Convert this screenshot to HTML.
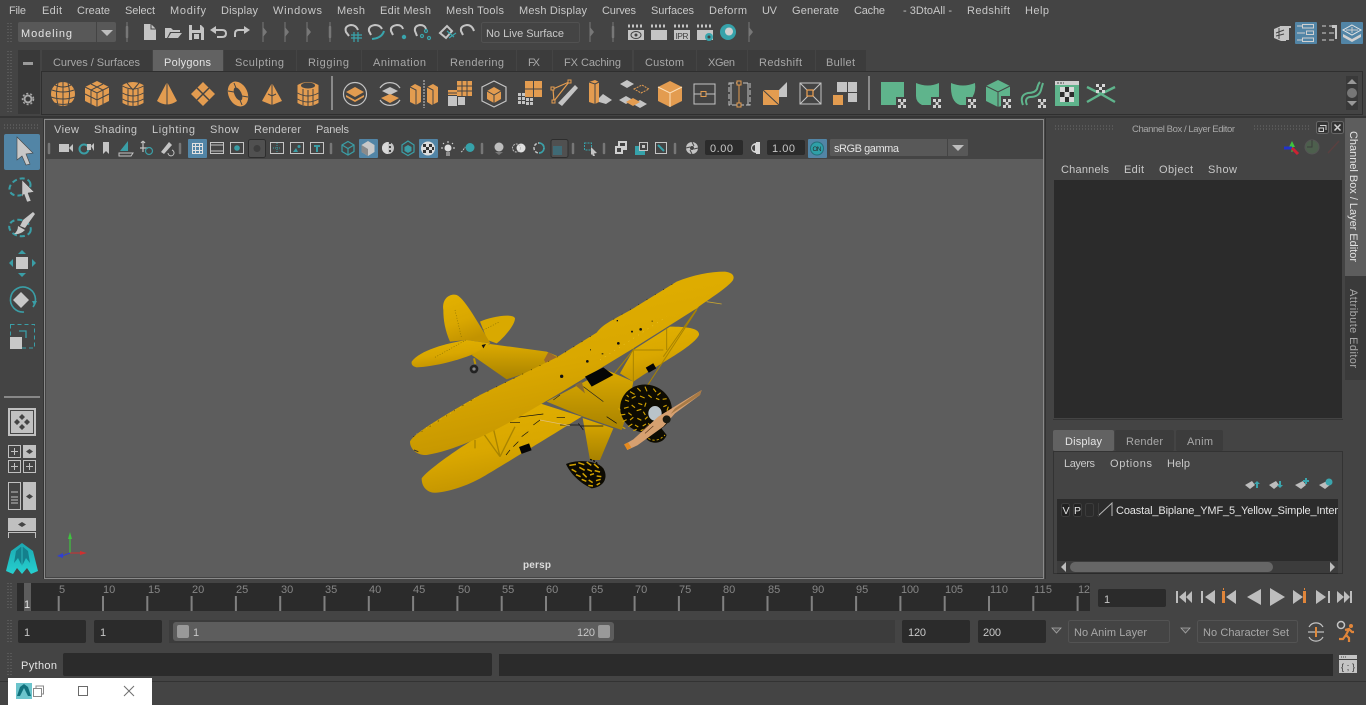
<!DOCTYPE html>
<html><head><meta charset="utf-8"><title>Maya</title>
<style>
html,body{margin:0;padding:0;background:#444;overflow:hidden}
svg{display:block}
text{font-family:"Liberation Sans",sans-serif;font-size:11px;fill:#c8c8c8;white-space:pre}
.d{fill:#a8a8a8}
.w{fill:#e4e4e4}
.g{fill:#868686}
.o{fill:#e39c50}
.gr{fill:#c4c4c4}
.t{fill:#2fa0a8}
.gn{fill:#5fb48c}
.ln{fill:none;stroke:#c4c4c4;stroke-width:1.2}
.tl{fill:none;stroke:#3a9ea6;stroke-width:1.5}
.bg{stroke:#444;stroke-width:1;fill:none}
.h{stroke:#777;stroke-width:2.5;stroke-linecap:round}
</style></head><body>
<svg width="1366" height="705" viewBox="0 0 1366 705" xmlns="http://www.w3.org/2000/svg">
<defs>
<linearGradient id="wing" x1="0" y1="0" x2="0.35" y2="1"><stop offset="0" stop-color="#e4b200"/><stop offset=".6" stop-color="#d9a700"/><stop offset="1" stop-color="#c29300"/></linearGradient>
<linearGradient id="fus" x1="0" y1="0" x2="0" y2="1"><stop offset="0" stop-color="#dcaa00"/><stop offset="1" stop-color="#a88200"/></linearGradient>
<linearGradient id="logo" x1="0" y1="0" x2="0" y2="1"><stop offset="0" stop-color="#1ba7b0"/><stop offset="1" stop-color="#26d0d0"/></linearGradient>
<g id="hd"><path d="M0,-10V10" stroke="#777" stroke-width="1"/><path d="M0,-5L4,0L0,5Z" fill="#777"/></g>
<g id="chk"><rect x="3" y="3" width="11" height="11" fill="#444"/><g fill="#d0d0d0"><rect x="5" y="5" width="3" height="3"/><rect x="10" y="5" width="3" height="3"/><rect x="7.500" y="8" width="3" height="3"/><rect x="5" y="11" width="3" height="3"/><rect x="10" y="11" width="3" height="3"/></g></g>
</defs>
<rect width="1366" height="705" fill="#444"/>

<!-- menu bar -->
<g>
<text x="9" y="14" textLength="17">File</text><text x="42" y="14" textLength="20">Edit</text><text x="77" y="14" textLength="33">Create</text><text x="125" y="14" textLength="30">Select</text><text x="170" y="14" textLength="36">Modify</text><text x="221" y="14" textLength="37">Display</text><text x="273" y="14" textLength="49">Windows</text><text x="337" y="14" textLength="28">Mesh</text><text x="380" y="14" textLength="51">Edit Mesh</text><text x="446" y="14" textLength="58">Mesh Tools</text><text x="519" y="14" textLength="68">Mesh Display</text><text x="602" y="14" textLength="34">Curves</text><text x="651" y="14" textLength="43">Surfaces</text><text x="709" y="14" textLength="38">Deform</text><text x="762" y="14" textLength="15">UV</text><text x="792" y="14" textLength="47">Generate</text><text x="854" y="14" textLength="31">Cache</text><text x="903" y="14" textLength="49">- 3DtoAll -</text><text x="967" y="14" textLength="43">Redshift</text><text x="1025" y="14" textLength="24">Help</text>
</g>

<!-- grips -->
<g stroke="#6c6c6c" stroke-width="1" stroke-dasharray="1 2" fill="none">
<path d="M8,23V42M11,23V42M8,51V113M11,51V113M4,125H38M4,128H38M8,583V608M11,583V608M8,620V642M11,620V642M8,653V676M11,653V676M1055,126H1113M1055,129H1113M1254,126H1309M1254,129H1309"/>
</g>

<!-- status line -->
<rect x="18" y="22" width="98" height="20" rx="2" fill="#585858"/><rect x="96" y="22" width="1" height="20" fill="#444"/>
<text x="21" y="37" class="w" textLength="51">Modeling</text>
<path d="M101,30H113L107,36Z" fill="#bdbdbd"/>
<path class="h" d="M127,27V37"/><path d="M127,22V42" stroke="#777"/>
<use href="#hd" x="263" y="32"/><use href="#hd" x="285" y="32"/><use href="#hd" x="307" y="32"/>
<path class="h" d="M330,27V37"/><path d="M330,22V42" stroke="#777"/>
<!-- file icons -->
<path d="M144,24H151L156,29V40H144Z" class="gr"/><path d="M151,24V29H156" fill="none" stroke="#444"/>
<path d="M165,38V28H171L173,30H180V32H170L167,38ZM168,38L171,33H182L178,38Z" class="gr"/>
<path d="M189,25H201L204,28V40H189Z" class="gr"/><rect x="192" y="25" width="8" height="5" fill="#444"/><rect x="192" y="33" width="9" height="7" fill="#444"/><rect x="194" y="34" width="5" height="5" class="gr"/>
<path d="M214,30H222Q226,30 226,33.500Q226,37 222,37H217" fill="none" stroke="#c4c4c4" stroke-width="2"/><path d="M210,30L216,26V34Z" class="gr"/>
<path d="M250,30L244,26V34Z" class="gr"/><path d="M245,30H239Q235,30 235,33.500V37" fill="none" stroke="#c4c4c4" stroke-width="2"/>
<!-- snap icons -->
<g fill="none" stroke="#c4c4c4" stroke-width="2">
<path d="M349,36L346,32Q344,26 351,25Q356,25 358,30"/><path d="M371,35L369,31Q368,26 375,25Q380,25 382,29"/><path d="M393,35L391,31Q390,26 397,25Q402,25 403,29"/><path d="M417,36L415,31Q414,26 420,25Q425,25 426,29"/><path d="M440,33L447,26L452,31L446,38Z"/><path d="M463,35L461,31Q460,26 467,25Q472,25 474,31"/>
</g>
<g fill="none" stroke="#39a5ad" stroke-width="1.200"><path d="M351,35H362M351,38H362M354,32V42M358,32V42"/><path d="M372,39Q382,38 384,31" stroke-width="2"/><circle cx="426" cy="31" r="1.500"/><circle cx="422" cy="36" r="1.500"/><circle cx="429" cy="38" r="1.500"/><path d="M447,31L454,37M449,38L456,33"/></g>
<circle cx="404" cy="37" r="2.200" fill="#39a5ad"/>
<rect x="481.500" y="22.500" width="98" height="20" rx="2" fill="#444" stroke="#515151"/>
<text x="486" y="37" textLength="78">No Live Surface</text>
<use href="#hd" x="590" y="32"/>
<path class="h" d="M613,27V37"/><path d="M613,22V42" stroke="#777"/>
<!-- render icons -->
<g class="gr">
<rect x="628" y="30" width="16" height="10"/><rect x="651" y="30" width="16" height="10"/><rect x="674" y="30" width="16" height="10"/><rect x="697" y="30" width="16" height="10"/>
</g>
<g fill="none" stroke="#c4c4c4" stroke-width="3" stroke-dasharray="2 2"><path d="M628,26H644M651,26H667M674,26H690M697,26H713"/></g>
<ellipse cx="636" cy="35" rx="5" ry="3.500" fill="none" stroke="#444"/><circle cx="636" cy="35" r="1.500" fill="#444"/>
<text x="675.500" y="39" style="font-size:8.500px;fill:#444" textLength="13">IPR</text>
<circle cx="709" cy="37" r="4" fill="#39a5ad"/><circle cx="709" cy="37" r="1.500" fill="#444"/>
<circle cx="728" cy="32" r="8" fill="#36a2aa"/><circle cx="729" cy="31.500" r="4" fill="#cfcfcf"/>
<use href="#hd" x="749" y="32"/>
<!-- top right icons -->
<rect x="1295" y="22" width="22" height="22" rx="1" fill="#5285a6"/><rect x="1341" y="22" width="22" height="22" rx="1" fill="#5285a6"/>
<path d="M1274,29L1281,26L1286,28V41H1281L1274,38Z" class="gr"/><path d="M1280,26H1291V28H1289V40H1286V28H1280Z" class="gr"/><path d="M1276,33L1284,30M1276,36L1284,34M1279,28V39" stroke="#444"/>
<g fill="none" stroke="#d0d0d0"><rect x="1302.500" y="24.500" width="11" height="3.500"/><rect x="1306.500" y="31" width="7" height="3.500"/><rect x="1302.500" y="38" width="11" height="3.500"/><path d="M1297,26H1302M1297,33H1305M1297,40H1302"/></g>
<g fill="none" stroke="#d0d0d0"><path d="M1322,26H1326M1322,33H1326M1322,40H1326M1329,26H1334M1329,33H1334M1329,40H1334"/></g><path d="M1332,25H1337V39H1335V28H1332Z" class="gr"/>
<path d="M1352,25L1361,30L1352,35L1343,30Z" fill="none" stroke="#e4e4e4"/><path d="M1343,34L1352,39L1361,34L1361,37L1352,42L1343,37Z" fill="#d0d0d0"/><path d="M1346,30H1358M1352,27V33" stroke="#ccc"/>

<!-- shelf -->
<rect x="18" y="50" width="22" height="64" fill="#393939"/>
<rect x="23" y="62" width="10" height="3" fill="#9a9a9a"/>
<circle cx="28" cy="99" r="3.500" fill="none" stroke="#a8a8a8" stroke-width="2"/><circle cx="28" cy="99" r="5.500" fill="none" stroke="#a8a8a8" stroke-width="1.500" stroke-dasharray="2 2"/>
<g fill="#3c3c3c">
<rect x="42" y="50" width="110" height="21"/><rect x="224" y="50" width="72" height="21"/><rect x="297" y="50" width="64" height="21"/><rect x="362" y="50" width="75" height="21"/><rect x="438" y="50" width="78" height="21"/><rect x="517" y="50" width="35" height="21"/><rect x="553" y="50" width="79" height="21"/><rect x="634" y="50" width="62" height="21"/><rect x="697" y="50" width="50" height="21"/><rect x="748" y="50" width="67" height="21"/><rect x="816" y="50" width="50" height="21"/>
</g>
<rect x="153" y="50" width="70" height="21" fill="#626262"/>
<g class="tabs">
<text x="53" y="66" class="d" textLength="87">Curves / Surfaces</text><text x="164" y="66" class="w" textLength="47">Polygons</text><text x="235" y="66" class="d" textLength="49">Sculpting</text><text x="308" y="66" class="d" textLength="41">Rigging</text><text x="373" y="66" class="d" textLength="53">Animation</text><text x="450" y="66" class="d" textLength="54">Rendering</text><text x="528" y="66" class="d" textLength="12">FX</text><text x="564" y="66" class="d" textLength="57">FX Caching</text><text x="645" y="66" class="d" textLength="39">Custom</text><text x="708" y="66" class="d" textLength="27">XGen</text><text x="759" y="66" class="d" textLength="43">Redshift</text><text x="826" y="66" class="d" textLength="29">Bullet</text>
</g>
<rect x="41.500" y="71.500" width="1321" height="43" fill="#444" stroke="#2f2f2f"/>
<rect x="1346" y="76" width="12" height="34" fill="#393939"/>
<path d="M1352,79L1357,84H1347Z" fill="#999"/><circle cx="1352" cy="93" r="5" fill="#777"/><path d="M1347,101H1357L1352,106Z" fill="#999"/>
<rect x="331" y="76" width="2" height="34" fill="#8a8a8a"/><rect x="868" y="76" width="2" height="34" fill="#8a8a8a"/>

<!-- polygon icons -->
<g transform="translate(63,94)"><circle r="12" class="o"/><path class="bg" d="M-11,-4Q0,0 11,-4M-12,3Q0,7 12,3M-9,9Q0,12 9,9M0,-12V12M-5,-11Q-8,0 -5,11M5,-11Q8,0 5,11M-8,-9Q0,-5 8,-9"/></g>
<g transform="translate(97,94)"><path d="M0,-13L12,-7V7L0,13L-12,7V-7Z" class="o"/><path class="bg" d="M-12,-7L0,-1L12,-7M0,-1V13M-6,-10L6,-4V10M6,-10L-6,-4V10M-12,0L0,6L12,0"/></g>
<g transform="translate(133,94)"><path d="M-10.500,-9Q0,-15 10.500,-9V9Q0,15 -10.500,9Z" class="o"/><path class="bg" d="M-10.500,-8Q0,-2 10.500,-8M-10.500,-1Q0,5 10.500,-1M-10.500,5Q0,11 10.500,5M0,-4V13M-5,-5V11M5,-5V11M0,-4L-6,-11M0,-4L6,-11"/></g>
<g transform="translate(167,94)"><path d="M0,-12L10,7Q0,14 -10,7Z" class="o"/><path class="bg" d="M0,-12V11"/></g>
<g transform="translate(203,94)"><path d="M0,-12L12,0L0,12L-12,0Z" class="o"/><path d="M-6,-6L6,6M6,-6L-6,6" stroke="#444" stroke-width="1.500"/></g>
<g transform="translate(238,94)" ><ellipse rx="9.500" ry="13" transform="rotate(-25)" class="o"/><ellipse rx="3.500" ry="7" transform="rotate(-25)" fill="#444"/><path class="bg" d="M-10,-3L-4,-2M10,3L4,2M-4,-11L-2,-6M4,11L2,6"/></g>
<g transform="translate(272,94)"><path d="M0,-11L10,7L0,11L-10,7Z" class="o"/><path class="bg" d="M0,-11V11M-4,0L0,2L4,0"/></g>
<g transform="translate(308,94)"><path d="M-10.500,-9Q0,-15 10.500,-9V9Q0,15 -10.500,9Z" class="o"/><ellipse cy="-8.500" rx="7" ry="3" fill="#444"/><path class="bg" d="M-10.500,-1Q0,5 10.500,-1M-10.500,5Q0,11 10.500,5M0,-4V13M-5,-5V11M5,-5V11"/></g>
<g transform="translate(355,94)"><circle r="11.500" fill="none" stroke="#c4c4c4" stroke-width="1.200"/><path d="M0,-7L9,-2L0,3L-9,-2Z" class="o"/><path d="M-9,1L0,6L9,1L9,3L0,8L-9,3Z" class="o"/></g>
<g transform="translate(390,94)"><path d="M-10,-6A12,12 0 0 1 10,-6M-10,6A12,12 0 0 0 10,6" fill="none" stroke="#c4c4c4" stroke-width="1.200"/><path d="M0,-7L8,-3L0,1L-8,-3Z" class="gr"/><path d="M0,0L9,4L0,9L-9,4Z" class="o"/></g>
<g transform="translate(424,94)"><path d="M-14,-7L-9,-10L-3,-7V8L-8,11L-14,8Z" class="o"/><path d="M3,-7L9,-10L14,-7V8L8,11L3,8Z" class="o"/><path d="M-14,-7L-8,-4V11M3,-7L9,-4V11" class="bg"/><path d="M0,-14V14" stroke="#ccc" stroke-dasharray="2 1"/></g>
<g transform="translate(460,94)"><rect x="-3" y="-13" width="15" height="15" class="o"/><rect x="-12" y="2" width="9" height="10" class="gr"/><rect x="-12" y="-4" width="9" height="5" class="o"/><rect x="-2" y="3" width="7" height="8" class="gr"/><path d="M2,-13V2M7,-13V2M-3,-8H12M-3,-3H12M-12,-1H-3" class="bg"/></g>
<g transform="translate(494,94)"><path d="M0,-13L12,-7V7L0,13L-12,7V-7Z" fill="none" stroke="#c4c4c4" stroke-width="1.200"/><path d="M0,-7L7,-3V5L0,9L-7,5V-3Z" class="o"/><path d="M-7,-3L0,1L7,-3M0,1V9" class="bg"/></g>
<g transform="translate(530,94)"><rect x="-5" y="-13" width="17" height="16" class="o"/><path d="M3.500,-13V3M-5,-5H12" class="bg"/><g fill="#c4c4c4"><rect x="-12" y="-1" width="3" height="3"/><rect x="-8" y="-1" width="3" height="3"/><rect x="-12" y="3" width="3" height="3"/><rect x="-8" y="3" width="3" height="3"/><rect x="-4" y="4" width="3" height="3"/><rect x="0" y="4" width="3" height="3"/><rect x="-12" y="7" width="3" height="3"/><rect x="-8" y="7" width="3" height="3"/><rect x="-4" y="8" width="3" height="3"/><rect x="0" y="8" width="3" height="3"/></g></g>
<g transform="translate(565,94)"><path d="M-11,7L-12,-5L4,-12L-11,7" fill="none" stroke="#e39c50" stroke-width="1.200"/><path d="M-7,9L10,-9L13,-6L-3,12Z" class="gr"/><rect x="-14" y="-7" width="3" height="3" fill="#444" stroke="#e39c50"/><rect x="-13" y="6" width="3" height="3" fill="#444" stroke="#e39c50"/><rect x="3" y="-14" width="3" height="3" fill="#444" stroke="#e39c50"/></g>
<g transform="translate(600,94)"><path d="M-11,-12L-5,-14L-1,-12V8L-5,10L-11,8Z" class="o"/><path d="M-11,-12L-5,-10L-1,-12M-5,-10V10" class="bg"/><path d="M3,0L12,6L6,10L-1,8V4Z" class="gr"/></g>
<g transform="translate(634,94)"><path d="M-7,-14L0,-10L-7,-6L-14,-10ZM-8,2L-1,6L-8,10L-15,6Z" class="gr"/><path d="M6,6L13,10L6,14L-1,10Z" class="gr"/><path d="M-1,2L6,-2L13,2L6,6Z" class="o" transform="translate(-7,6)"/><path d="M0,-5L8,-9L15,-5L7,-1Z" fill="none" stroke="#e39c50" stroke-dasharray="2 1"/></g>
<g transform="translate(670,94)"><path d="M0,-13L12,-7V7L0,13L-12,7V-7Z" class="o"/><path d="M-12,-7L0,-1L12,-7M0,-1V13" stroke="#fbe0bb" stroke-width="1" fill="none"/></g>
<g transform="translate(704,94)"><rect x="-10" y="-10" width="21" height="20" fill="none" stroke="#c4c4c4"/><rect x="-3" y="-2.500" width="5" height="5" fill="#444" stroke="#e39c50"/><path d="M-10,0H-3M2,0H11" stroke="#c4c4c4"/></g>
<g transform="translate(739,94)"><path d="M-10,-11H11V11H-10Z" fill="none" stroke="#c4c4c4" stroke-dasharray="5 2"/><path d="M-8,-11V11M9,-11V11" stroke="#c4c4c4"/><path d="M-2,-11H2M-2,11H2M0,-9V9" stroke="#e39c50"/><rect x="-2" y="-13" width="4" height="4" fill="#444" stroke="#e39c50"/><rect x="-2" y="9" width="4" height="4" fill="#444" stroke="#e39c50"/></g>
<g transform="translate(775,94)"><path d="M-12,-4H4V11H-12Z" class="o"/><path d="M-12,-4L4,11" stroke="#444"/><path d="M4,-4L12,-12V3H4Z" class="gr"/></g>
<g transform="translate(810,94)"><rect x="-10" y="-11" width="21" height="21" fill="none" stroke="#c4c4c4"/><path d="M-10,-11L11,10M11,-11L-10,10" stroke="#c4c4c4"/><rect x="-3" y="-4" width="6" height="6" fill="#444" stroke="#e39c50" stroke-width="1.300"/></g>
<g transform="translate(845,94)"><rect x="-8" y="-12" width="10" height="10" class="gr"/><rect x="3" y="-12" width="9" height="10" class="gr"/><rect x="3" y="-1" width="9" height="9" class="gr"/><rect x="-12" y="1" width="10" height="10" class="o"/></g>

<!-- green icons -->
<g transform="translate(893,94)"><rect x="-12" y="-12" width="23" height="23" class="gn"/><use href="#chk"/></g>
<g transform="translate(928,94)"><path d="M-12,-11Q0,-6 11,-11V6L5,11H-6Q-12,8 -12,2Z" class="gn"/><use href="#chk"/></g>
<g transform="translate(963,94)"><path d="M-12,-11Q0,-6 12,-11Q13,-3 10,2L7,11H-3Q-13,8 -12,-11Z" class="gn"/><use href="#chk"/></g>
<g transform="translate(998,94)"><path d="M0,-14L12,-8V2H3V12L0,13L-12,7V-8Z" class="gn"/><path d="M-12,-8L0,-2L12,-8M0,-2V13" stroke="#444" fill="none"/><use href="#chk"/></g>
<g transform="translate(1033,94)"><path d="M-10,11Q-14,1 -5,-1Q2,-1 4,-5Q5,-10 7,-12" fill="none" stroke="#5fb48c" stroke-width="2"/><path d="M-6,11Q-9,4 -3,3Q6,3 8,-4Q9,-8 10,-11" fill="none" stroke="#5fb48c" stroke-width="2"/><use href="#chk"/></g>
<g transform="translate(1067,94)"><rect x="-12" y="-13" width="24" height="25" class="gn"/><rect x="-12" y="-13" width="24" height="4" fill="#d0d0d0"/><path d="M-10,-11H-3" stroke="#444" stroke-dasharray="2 1"/><rect x="-7" y="-7" width="14" height="15" fill="#2e2e2e"/><g fill="#d8d8d8"><rect x="-7" y="-7" width="5" height="5"/><rect x="2" y="-7" width="5" height="5"/><rect x="-2.500" y="-2" width="5" height="5"/><rect x="-7" y="3" width="5" height="5"/><rect x="2" y="3" width="5" height="5"/></g></g>
<g transform="translate(1101,94)"><path d="M-14,-7L-6,-3L0,0L6,-3L14,-7M-14,8L-7,4L0,0L7,4L14,8" fill="none" stroke="#5fb48c" stroke-width="2.400"/><g fill="#d8d8d8"><rect x="-5" y="-10" width="3" height="3"/><rect x="1" y="-10" width="3" height="3"/><rect x="-2" y="-7" width="3" height="3"/><rect x="-5" y="-4" width="3" height="3"/><rect x="1" y="-4" width="3" height="3"/></g></g>

<!-- dividers -->
<rect x="0" y="116" width="1366" height="2" fill="#353535"/>
<rect x="43" y="118" width="1" height="461" fill="#333"/>
<rect x="1045" y="118" width="1" height="461" fill="#333"/>

<!-- left toolbox -->
<rect x="4" y="134" width="36" height="36" rx="2" fill="#5285a6"/>
<path d="M17,137L33,153L26,154L30,164L26,165L22,156L17,160Z" fill="#c8c8c8" stroke="#444" stroke-width=".6"/>
<ellipse cx="20" cy="187" rx="11" ry="8" transform="rotate(-25 20 187)" fill="none" stroke="#3a9ea6" stroke-width="2" stroke-dasharray="5 3"/>
<path d="M22,180L34,192L28,193L31,201L27,202L24,194L22,197Z" fill="#c8c8c8" stroke="#444" stroke-width=".5"/>
<ellipse cx="20" cy="228" rx="11" ry="8" transform="rotate(15 20 228)" fill="none" stroke="#3a9ea6" stroke-width="2" stroke-dasharray="5 3"/>
<path d="M35,214L25,228L20,226L23,220L33,212Z" fill="#c8c8c8"/><path d="M18,226L25,230Q20,235 14,234Q18,231 18,226Z" fill="#c8c8c8"/>
<rect x="16" y="257" width="12" height="12" fill="#c8c8c8"/>
<path d="M22,250L26,254H18ZM22,277L18,273H26ZM9,263L13,259V267ZM36,263L32,267V259Z" fill="#3a9ea6"/>
<path d="M33,307A12.500,12.500 0 1 0 24,312" fill="none" stroke="#3a9ea6" stroke-width="1.600"/><path d="M32,301H37L34.500,306Z" fill="#3a9ea6"/>
<path d="M21,292L29,300L21,308L13,300Z" fill="#c8c8c8"/>
<rect x="10.500" y="324.500" width="24" height="23.500" fill="none" stroke="#3a9ea6" stroke-dasharray="4 3"/>
<rect x="10" y="337" width="12" height="12" fill="#c8c8c8"/><path d="M19,331H26V338" fill="none" stroke="#3a9ea6" stroke-width="1.300"/>
<rect x="4" y="396" width="36" height="2" fill="#888"/>
<rect x="8" y="408" width="28" height="28" fill="#c0c0c0"/><rect x="10.500" y="410.500" width="23" height="23" fill="#c0c0c0" stroke="#444"/>
<path d="M22,414L25,417L22,420L19,417ZM17,419L20,422L17,425L14,422ZM27,419L30,422L27,425L24,422ZM22,424L25,427L22,430L19,427Z" fill="#444"/>
<g fill="none" stroke="#c0c0c0"><rect x="8.500" y="445.500" width="12" height="12"/><rect x="8.500" y="460.500" width="12" height="12"/><rect x="23.500" y="460.500" width="12" height="12"/></g>
<rect x="23" y="445" width="13" height="13" fill="#c0c0c0"/><path d="M29.500,449L33,451.500L29.500,454L26,451.500Z" fill="#444"/>
<path d="M14.500,448V455M11,451.500H18M14.500,463V470M11,466.500H18M29.500,463V470M26,466.500H33" stroke="#c0c0c0"/>
<rect x="8.500" y="482.500" width="12" height="27" fill="none" stroke="#c0c0c0"/><rect x="23" y="482" width="13" height="28" fill="#c0c0c0"/><path d="M29.500,494L33,496.500L29.500,499L26,496.500Z" fill="#444"/><path d="M11,492H18M11,497H18M11,500H18M11,503H18" stroke="#c0c0c0" stroke-width="1"/>
<rect x="8" y="518" width="28" height="13" fill="#c0c0c0"/><path d="M22,522L26,524.500L22,527L18,524.500Z" fill="#444"/><path d="M8.500,538V532.500H35.500V538" fill="none" stroke="#c0c0c0"/>
<!-- maya logo -->
<path d="M22,543L33,551L38,571L31,574L27,568L22,574L17,568L13,574L6,571L11,551Z" fill="url(#logo)"/><path d="M16,551L22,546L28,551L30,563L26,558L22,566L18,558L14,563Z" fill="#14808c"/><path d="M22,546V566" stroke="#2cb6bc"/>

<!-- viewport -->
<rect x="44.500" y="119.500" width="999" height="459" fill="#444" stroke="#8a8a8a"/>
<rect x="46" y="159" width="997" height="418" fill="#5d5d5d"/>
<text x="54" y="133" textLength="25">View</text><text x="94" y="133" textLength="43">Shading</text><text x="152" y="133" textLength="43">Lighting</text><text x="210" y="133" textLength="29">Show</text><text x="254" y="133" textLength="47">Renderer</text><text x="316" y="133" textLength="33">Panels</text>
<g class="sep"><path class="h" d="M49,144V153M180,144V153M331,144V153M482,144V153M573,144V153M604,144V153M675,144V153"/></g>
<!-- panel icons -->
<rect x="188" y="139" width="19" height="19" rx="1" fill="#5285a6"/><rect x="359" y="139" width="19" height="19" rx="1" fill="#5285a6"/><rect x="419" y="139" width="19" height="19" rx="1" fill="#5285a6"/><rect x="808" y="139" width="19" height="19" rx="1" fill="#5285a6"/>
<path d="M59,144H69V152H59ZM69,148L73,144V152Z" fill="#c4c4c4"/>
<g transform="translate(86,148)"><circle cx="-2" cy="1" r="4.500" fill="none" stroke="#3a9ea6" stroke-width="2"/><path d="M1,-4H5V2H1ZM5,-2L8,-5V3Z" fill="#c4c4c4"/></g>
<path d="M103,142H109V154L106,151L103,154Z" fill="#c4c4c4"/>
<path d="M120,151L128,141V151Z" fill="#3a9ea6"/><path d="M119,153H133L131,156H119Z" fill="none" stroke="#c4c4c4"/>
<g transform="translate(146,148)" stroke="#c4c4c4" stroke-width="1.200" fill="none"><path d="M-6,0H2M-3,-6V4M-3,-7L-5,-5M-3,-7L-1,-5"/><circle cx="3" cy="3" r="3.500" stroke="#3a9ea6"/></g>
<g transform="translate(166,148)"><path d="M-5,4L3,-6L6,-3L-2,6Z" fill="#c4c4c4"/><path d="M2,5A3,3 0 1 0 6,2" fill="none" stroke="#c4c4c4"/></g>
<g fill="none" stroke="#e0e0e0"><rect x="192.500" y="143.500" width="10" height="10"/><path d="M195.500,144V153M199.500,144V153M193,146.500H202M193,150.500H202"/></g>
<g fill="none" stroke="#c4c4c4"><rect x="210.500" y="142.500" width="13" height="11"/><path d="M211,145H223M211,151H223"/><rect x="230.500" y="142.500" width="13" height="11"/><rect x="270.500" y="142.500" width="13" height="11"/><rect x="290.500" y="142.500" width="13" height="11"/><rect x="310.500" y="142.500" width="13" height="11"/></g>
<circle cx="237" cy="148" r="2.800" fill="#3a9ea6"/>
<rect x="248.500" y="139.500" width="17" height="18" rx="2" fill="#505050" stroke="#2e2e2e"/><circle cx="257" cy="148.500" r="3.500" fill="#3d3d3d"/>
<path d="M273,148H281" stroke="#3a9ea6" stroke-dasharray="1 1"/><path d="M277,143V153" stroke="#3a9ea6" stroke-dasharray="1 1"/>
<path d="M293,152L296,148L298,152Z" fill="#3a9ea6"/><circle cx="299" cy="146.500" r="1.500" fill="#3a9ea6"/>
<path d="M314,145H320V147H318V152H316V147H314Z" fill="#3a9ea6"/>
<g fill="none" stroke="#3a9ea6" stroke-width="1.200"><path d="M348,141.500L354,145V151.500L348,155L342,151.500V145Z"/><path d="M342,145L348,148.500L354,145M348,148.500V155"/></g>
<path d="M368,141L374.500,145V152L368,156L361.500,152V145Z" fill="#c8c8c8"/><path d="M361.500,145L368,149V156L361.500,152Z" fill="#8a8a8a"/>
<circle cx="388" cy="148" r="6" fill="#c4c4c4"/><path d="M388,142V154A6,6 0 0 1 388,142" fill="#d8d8d8"/><path d="M390,142V154" stroke="#444" stroke-dasharray="2 2" stroke-width="2"/>
<path d="M408,141L414,145V152L408,155.500L402,152V145Z" fill="none" stroke="#3a9ea6" stroke-width="1.200"/><path d="M408,145L411.500,147V151L408,153L404.500,151V147Z" fill="#3a9ea6"/>
<circle cx="428" cy="148.500" r="7" fill="#ddd"/><g fill="#333"><rect x="423" y="144" width="3" height="3"/><rect x="429" y="144" width="3" height="3"/><rect x="426" y="147" width="3" height="3"/><rect x="432" y="147" width="2" height="3"/><rect x="423" y="150" width="3" height="3"/><rect x="429" y="150" width="3" height="3"/></g>
<circle cx="448" cy="148" r="3.500" fill="#ddd"/><path d="M448,141V143M441,148H443M453,148H455M443,143L444,144M453,143L452,144M446,153H450M446,155H450" stroke="#ddd"/>
<circle cx="470" cy="147.500" r="4.500" fill="#36a2aa"/><path d="M461,152Q463,151 465,147" fill="none" stroke="#c4c4c4" stroke-dasharray="2 1"/>
<circle cx="499" cy="147" r="4.500" fill="#bdbdbd"/><path d="M495,152L499,155L503,152Z" fill="#777"/>
<circle cx="521" cy="148" r="4.500" fill="#e0e0e0"/><circle cx="516.500" cy="148" r="4" fill="none" stroke="#bbb" stroke-dasharray="2 1"/>
<circle cx="539" cy="148" r="5" fill="none" stroke="#c4c4c4" stroke-width="1.500" stroke-dasharray="3 1.500"/><path d="M539,143A5,5 0 0 1 539,153" fill="none" stroke="#36a2aa" stroke-width="1.500"/>
<rect x="551" y="139.500" width="17" height="18" rx="2" fill="#505050" stroke="#2e2e2e"/><rect x="553" y="146" width="9" height="9" fill="#3f6a75"/>
<rect x="584.500" y="143" width="7" height="7" fill="none" stroke="#36a2aa" stroke-dasharray="2 1"/><path d="M591,147L597,153L594,153.500L595,156L593,156L592,154L591,155Z" fill="#c4c4c4"/>
<g fill="#d0d0d0"><rect x="618" y="141" width="9" height="9"/><rect x="615" y="146" width="8" height="8"/></g><rect x="617" y="148" width="4" height="4" fill="#444"/><rect x="620" y="143" width="5" height="3" fill="#444"/>
<rect x="635" y="146" width="10" height="9" fill="#36a2aa"/><rect x="639.500" y="142.500" width="8" height="8" fill="#444" stroke="#c4c4c4"/><rect x="642" y="145" width="3" height="3" fill="#c4c4c4"/>
<rect x="655.500" y="142.500" width="11" height="11" fill="none" stroke="#c4c4c4"/><path d="M658,145L664,151" stroke="#36a2aa" stroke-width="2"/>
<circle cx="692" cy="148" r="6" fill="#c4c4c4"/><circle cx="692" cy="148" r="2" fill="#444"/><path d="M692,142L694,146M698,148L694,149M692,154L690,150M686,148L690,147" stroke="#444"/>
<rect x="705" y="140" width="38" height="15" rx="2" fill="#2b2b2b"/><text x="710" y="152" textLength="23">0.00</text>
<path d="M756,142H760V154H756Z" fill="#d8d8d8"/><path d="M756,143A5,5 0 0 0 756,153" fill="#d8d8d8"/><path d="M755,145A3,3 0 0 0 755,151Z" fill="#444"/>
<rect x="767" y="140" width="38" height="15" rx="2" fill="#2b2b2b"/><text x="772" y="152" textLength="23">1.00</text>
<circle cx="817" cy="148.500" r="6.500" fill="#2fa0a8" stroke="#25707a"/><text x="812.500" y="151" style="font-size:6.500px;fill:#2a2a2a" textLength="9">ON</text>
<rect x="830" y="139" width="138" height="17" rx="1" fill="#585858"/><rect x="947" y="139" width="1" height="17" fill="#444"/>
<text x="834" y="152" class="w" textLength="65">sRGB gamma</text><path d="M952,145H964L958,151Z" fill="#bdbdbd"/>

<!-- plane -->
<g transform="translate(400,260) scale(.33333)">
<path d="M240,185C270,170 340,158 345,175C345,195 310,235 290,250L262,240Z" fill="#d9a900"/>
<path d="M130,150C125,115 150,100 170,105C195,115 240,200 272,250L200,240L150,245C135,210 130,180 130,150Z" fill="url(#wing)"/>
<path d="M35,305C60,270 140,250 200,240L270,250L250,268C190,300 100,320 50,322C40,320 33,315 35,305Z" fill="url(#wing)"/>
<path d="M215,285L270,252L440,275L500,300L320,358Z" fill="url(#fus)"/>
<path d="M432,300L445,276L472,292L440,314Z" fill="#9a6a30"/>
<!-- lower wing right -->
<path d="M700,270L810,200C860,200 900,205 897,225C880,260 780,310 700,365L660,340Z" fill="url(#wing)"/>
<path d="M700,265V365M640,345L700,270M700,270L790,270M800,205V270M895,140L790,290M890,150L740,380" stroke="#a98400" stroke-width="3" fill="none"/>
<!-- lower wing left -->
<path d="M65,655C100,610 300,480 420,430L545,470C450,530 300,620 250,650C200,680 130,700 100,698C80,695 65,680 65,655Z" fill="url(#wing)"/>
<path d="M280,505L300,590M225,540V565M250,520L300,590M345,500L300,590" stroke="#a98400" stroke-width="4" fill="none"/>
<path d="M330,488H360M350,472L430,462M470,472H495M400,495L420,480M365,530L385,515M340,560L355,545M318,585L330,570M480,495L540,495" stroke="#111" stroke-width="2"/>
<path d="M420,480L510,497" stroke="#e0c080" stroke-width="2"/>
<rect x="360" y="555" width="32" height="22" transform="rotate(-20 376 566)" fill="#050505"/>
<rect x="740" y="315" width="26" height="18" transform="rotate(-30 753 324)" fill="#050505"/>
<!-- fuselage -->
<path d="M440,425L620,330L700,365C690,420 680,470 665,510L550,470Z" fill="url(#fus)"/>
<!-- landing gear -->
<path d="M548,474L640,505L600,600L570,600Z" fill="url(#fus)"/>
<path d="M498,612C530,598 590,600 610,625C625,650 615,680 575,685C540,670 510,640 498,612Z" fill="#0c0a02"/>
<path d="M508,616l20,-3M535,608l18,6M560,606l14,10M582,612l14,12M515,628l14,8M538,622l16,9M562,628l14,6M584,632l16,4M528,644l14,6M548,640l12,12M570,645l12,-4M590,648l14,2M545,658l14,6M566,660l12,8M588,662l14,-4M565,676l14,2M590,675l10,-6" fill="none" stroke="#d2a200" stroke-width="4.500"/>
<path d="M570,598Q595,605 598,625" fill="none" stroke="#0c0a02" stroke-width="4" stroke-dasharray="6 4"/>
<!-- upper wing -->
<path d="M30,545C40,525 90,490 240,405L470,292L590,218C610,190 640,180 700,145L830,65C880,45 930,35 975,35C1000,38 1005,50 998,62C980,85 930,115 890,145L700,265L470,405L350,475C280,515 170,570 80,585C55,587 30,570 30,545Z" fill="url(#wing)"/>
<path d="M40,530L240,405L470,292L590,218M640,178L830,65" fill="none" stroke="#2a2200" stroke-width="1.800" stroke-dasharray="3 26"/>
<path d="M240,405L45,525M600,300L800,170" fill="none" stroke="#f2d040" stroke-width="1.500" stroke-dasharray="3 14"/>
<g fill="#111"><circle cx="485" cy="349" r="5"/><circle cx="562" cy="304" r="4"/><circle cx="655" cy="250" r="4"/><circle cx="722" cy="208" r="4"/><circle cx="696" cy="215" r="3"/><rect x="650" y="180" width="4" height="4"/><rect x="755" y="182" width="3" height="3"/><rect x="605" y="280" width="5" height="3"/><rect x="570" y="268" width="3" height="3"/></g>
<path d="M920,125L965,132" stroke="#c8a530" stroke-width="2.500"/>
<path d="M55,575L42,570" stroke="#333" stroke-width="3"/>
<!-- black patch & struts -->
<path d="M555,350L610,322L640,345L575,380Z" fill="#050505"/>
<path d="M525,375L545,365L555,400Z" fill="#8a6a30"/><path d="M550,380L610,425M480,405L460,420" stroke="#222" stroke-width="2"/>
<path d="M620,470L650,490M540,498H610M535,490L550,510" stroke="#111" stroke-width="2"/>
<!-- cowling -->
<ellipse cx="738" cy="446" rx="78" ry="72" transform="rotate(15 738 446)" fill="#0d0b02"/>
<path d="M690,395l14,8M712,384l10,10M735,380l6,14M760,386l8,10M782,398l-10,8M800,416l-12,2M675,420l12,4M695,415l12,-6M720,408l14,6M745,405l10,8M768,415l10,4M672,445l14,-4M695,435l10,8M715,430l12,4M738,428l-4,12M660,465l16,-2M685,458l10,8M710,452l14,-4M730,455l6,10M668,485l12,-6M690,480l10,-8M712,475l12,6M735,478l8,-8M685,500l12,-8M705,495l10,6M728,498l10,-6M745,490l6,8M700,512l10,-4M722,512l10,-4M790,440l10,-4M805,440l-4,12M680,405l6,6M655,445l6,6M668,502l8,4" fill="none" stroke="#cfa000" stroke-width="3.500"/>
<ellipse cx="765" cy="460" rx="20" ry="22" fill="#b9c3c9"/>
<path d="M735,530C745,555 790,555 800,525L780,500Z" fill="#0d0b02"/>
<path d="M745,535Q770,550 795,525" fill="none" stroke="#cfa000" stroke-width="3" stroke-dasharray="7 6"/>
<!-- propeller -->
<path d="M905,390L815,445L775,470L700,538L674,553L682,570L712,556L790,500L825,460L900,405Z" fill="#d6a070"/>
<path d="M905,390L825,445L812,462L900,405Z" fill="#a87a45"/>
<path d="M672,553L682,570L694,562L684,547Z" fill="#e58a1f"/>
<path d="M735,520L760,498M728,512L745,495" stroke="#5a3a20" stroke-width="2"/>
<circle cx="800" cy="478" r="12" fill="#1a1a10"/>
<!-- tail wheel -->
<path d="M222,295L226,312" stroke="#bb9400" stroke-width="6"/><circle cx="222" cy="327" r="13" fill="#222"/><circle cx="222" cy="327" r="5" fill="#888"/>
<path d="M245,255L258,252L250,265Z" fill="#111"/>
<path d="M105,292L198,240M165,150L185,235M250,210L300,185" stroke="#8a7000" stroke-width="2" stroke-dasharray="3 5"/>
</g>

<!-- axis + label -->
<path d="M70,553V538" stroke="#3fc43f" stroke-width="1.200"/><path d="M70,532L72,539H68Z" fill="#3fc43f"/>
<path d="M70,553H81" stroke="#d03030"/><path d="M87,553L80,555V551Z" fill="#d03030"/>
<path d="M70,553L62,556" stroke="#3040d0"/><path d="M57,556L63,553V558Z" fill="#3040d0"/>
<text x="523" y="568" style="font-size:10px;font-weight:bold;fill:#dcdcdc" textLength="28">persp</text>

<!-- channel box -->
<text x="1132" y="132" style="font-size:9.500px" class="d" textLength="103">Channel Box / Layer Editor</text>
<rect x="1316.500" y="121.500" width="12" height="12" rx="2" fill="#333" stroke="#666"/><rect x="1331.500" y="121.500" width="12" height="12" rx="2" fill="#333" stroke="#666"/>
<path d="M1320,125.500H1326V130M1319,128H1323.500V131.500H1319Z" fill="none" stroke="#d0d0d0"/><path d="M1334.500,124.500L1340.500,130.500M1340.500,124.500L1334.500,130.500" stroke="#d0d0d0" stroke-width="1.500"/>
<path d="M1292,147V152" stroke="#3fc43f"/><path d="M1292,141L1295,147H1289Z" fill="#3fc43f"/><path d="M1292,148L1284,148" stroke="#2233cc" stroke-width="3"/><path d="M1292,148L1298,154" stroke="#cc2233" stroke-width="3"/>
<circle cx="1312" cy="147" r="7" fill="#4d5f4d" stroke="#555"/><path d="M1312,140V147H1307" fill="none" stroke="#3c3c3c"/>
<path d="M1328,153L1339,141" stroke="#5a4040" stroke-width="1.500"/>
<text x="1061" y="173" textLength="48">Channels</text><text x="1124" y="173" textLength="20">Edit</text><text x="1159" y="173" textLength="34">Object</text><text x="1208" y="173" textLength="29">Show</text>
<rect x="1054" y="180" width="288" height="238" fill="#2b2b2b"/>
<rect x="1053" y="419" width="290" height="1" fill="#353535"/>
<rect x="1053" y="430" width="61" height="21" rx="2" fill="#626262"/><rect x="1115" y="430" width="59" height="21" rx="2" fill="#3c3c3c"/><rect x="1176" y="430" width="47" height="21" rx="2" fill="#3c3c3c"/>
<text x="1065" y="445" class="w" textLength="37">Display</text><text x="1126" y="445" class="d" textLength="37">Render</text><text x="1187" y="445" class="d" textLength="26">Anim</text>
<rect x="1053.500" y="451.500" width="289" height="122" fill="#444" stroke="#333"/>
<text x="1064" y="467" textLength="31">Layers</text><text x="1110" y="467" textLength="42">Options</text><text x="1167" y="467" textLength="23">Help</text>
<g fill="#bdbdbd"><path d="M1245,485L1252,481L1255,485L1250,489Z"/><path d="M1269,485L1276,481L1279,485L1274,489Z"/><path d="M1295,485L1303,481L1306,485L1301,489Z"/><path d="M1319,485L1327,481L1330,485L1325,489Z"/></g>
<path d="M1257,481L1254,484H1256V488H1258V484H1260Z" fill="#3ba5ad"/><path d="M1280,488L1283,485H1281V481H1279V485H1277Z" fill="#3ba5ad"/><path d="M1306,478V484M1303,481H1309" stroke="#3ba5ad" stroke-width="2"/><circle cx="1329" cy="482" r="3.500" fill="#3ba5ad"/>
<rect x="1057" y="499" width="281" height="75" fill="#2b2b2b"/>
<rect x="1061.500" y="503.500" width="8" height="13" rx="2" fill="#222" stroke="#3c3c3c"/><rect x="1073.500" y="503.500" width="8" height="13" rx="2" fill="#222" stroke="#3c3c3c"/><rect x="1085.500" y="503.500" width="8" height="13" rx="2" fill="#2b2b2b" stroke="#3c3c3c"/>
<text x="1062.500" y="514" style="font-size:10.500px" class="w">V</text><text x="1074" y="514" style="font-size:10.500px" class="w">P</text>
<path d="M1098,516L1112,503V516" fill="none" stroke="#b8b8b8"/>
<path d="M1098.500,503V516" stroke="#3a3a3a"/>
<text x="1116" y="514" class="w" textLength="222">Coastal_Biplane_YMF_5_Yellow_Simple_Inter</text>
<rect x="1057" y="561" width="281" height="12" fill="#3c3c3c"/>
<rect x="1070" y="562" width="203" height="10" rx="5" fill="#666"/>
<path d="M1066,562V572L1061,567ZM1330,562L1335,567L1330,572Z" fill="#bdbdbd"/>

<!-- side tabs -->
<rect x="1345" y="118" width="21" height="158" fill="#5d5d5d"/>
<rect x="1345" y="276" width="21" height="104" fill="#3a3a3a"/>
<text transform="translate(1350,131) rotate(90)" class="w" textLength="131">Channel Box / Layer Editor</text>
<text transform="translate(1350,289) rotate(90)" class="d" textLength="79">Attribute Editor</text>

<!-- time slider -->
<rect x="17" y="583" width="1073" height="28" fill="#2b2b2b"/>
<rect x="24" y="583" width="7" height="28" fill="#5d5d5d"/>
<text x="24" y="608" class="w" style="font-size:11px">1</text>
<g stroke="#808080" stroke-width="2"><path d="M58.700,596V611M103,596V611M147.300,596V611M191.600,596V611M235.900,596V611M280.200,596V611M324.500,596V611M368.800,596V611M413.100,596V611M457.400,596V611M501.700,596V611M546,596V611M590.300,596V611M634.600,596V611M678.900,596V611M723.200,596V611M767.500,596V611M811.800,596V611M856.100,596V611M900.400,596V611M944.700,596V611M989,596V611M1033.300,596V611M1077.600,596V611"/></g>
<g class="lab">
<text x="59" y="593" class="g">5</text><text x="103" y="593" class="g">10</text><text x="148" y="593" class="g">15</text><text x="192" y="593" class="g">20</text><text x="236" y="593" class="g">25</text><text x="281" y="593" class="g">30</text><text x="325" y="593" class="g">35</text><text x="369" y="593" class="g">40</text><text x="413" y="593" class="g">45</text><text x="458" y="593" class="g">50</text><text x="502" y="593" class="g">55</text><text x="546" y="593" class="g">60</text><text x="591" y="593" class="g">65</text><text x="635" y="593" class="g">70</text><text x="679" y="593" class="g">75</text><text x="723" y="593" class="g">80</text><text x="768" y="593" class="g">85</text><text x="812" y="593" class="g">90</text><text x="856" y="593" class="g">95</text><text x="901" y="593" class="g" textLength="18">100</text><text x="945" y="593" class="g" textLength="18">105</text><text x="990" y="593" class="g" textLength="18">110</text><text x="1034" y="593" class="g" textLength="18">115</text><text x="1078" y="593" class="g" textLength="12">12</text>
</g>
<rect x="1098" y="589" width="68" height="18" rx="2" fill="#2b2b2b"/><text x="1104" y="603">1</text>
<!-- transport -->
<g fill="#bdbdbd">
<path d="M1176,591H1178V603H1176ZM1186,591V603L1179,597ZM1192,591V603L1186,597Z"/>
<path d="M1201,591H1203V603H1201ZM1215,590V604L1205,597Z"/>
<path d="M1236,590V604L1226,597Z"/>
<path d="M1261,589V605L1247,597Z"/>
<path d="M1270,588L1285,597L1270,606Z"/>
<path d="M1293,590V604L1303,597Z"/>
<path d="M1316,590V604L1326,597ZM1328,591H1330V603H1328Z"/>
<path d="M1337,591V603L1344,597ZM1344,591V603L1350,597ZM1350,591H1352V603H1350Z"/>
</g>
<rect x="1222" y="591" width="3" height="12" fill="#e0853a"/><rect x="1303" y="591" width="3" height="12" fill="#e0853a"/>
<path d="M1223.500,588V606M1304.500,588V606" stroke="#e0853a" stroke-dasharray="2 16"/>

<!-- range -->
<rect x="18" y="620" width="68" height="23" rx="2" fill="#2b2b2b"/><rect x="94" y="620" width="68" height="23" rx="2" fill="#2b2b2b"/>
<text x="24" y="636">1</text><text x="100" y="636">1</text>
<rect x="169" y="620" width="726" height="23" fill="#3c3c3c"/>
<rect x="173" y="622" width="441" height="19" rx="3" fill="#5d5d5d"/>
<rect x="177" y="625" width="12" height="13" rx="2" fill="#999"/><rect x="598" y="625" width="12" height="13" rx="2" fill="#999"/>
<text x="193" y="636">1</text><text x="577" y="636" textLength="18">120</text>
<rect x="902" y="620" width="68" height="23" rx="2" fill="#2b2b2b"/><rect x="978" y="620" width="68" height="23" rx="2" fill="#2b2b2b"/>
<text x="908" y="636" textLength="18">120</text><text x="983" y="636" textLength="18">200</text>
<path d="M1052,628H1061L1056.500,633Z" fill="#555" stroke="#a8a8a8" stroke-width=".8"/><path d="M1181,628H1190L1185.500,633Z" fill="#555" stroke="#a8a8a8" stroke-width=".8"/>
<rect x="1068.500" y="620.500" width="101" height="22" rx="2" fill="#444" stroke="#535353"/><rect x="1197.500" y="620.500" width="100" height="22" rx="2" fill="#444" stroke="#535353"/>
<text x="1074" y="636" class="d" textLength="73">No Anim Layer</text><text x="1203" y="636" class="d" textLength="86">No Character Set</text>
<g fill="none" stroke="#c4c4c4" stroke-width="1.200"><path d="M1309,627A8,8 0 0 1 1323,627M1323,637A8,8 0 0 1 1309,637"/><path d="M1308,632H1324"/></g><path d="M1315,627H1317V637H1315Z" fill="#e08a3c"/>
<circle cx="1341" cy="625" r="3.500" fill="none" stroke="#c4c4c4" stroke-width="1.500"/>
<g fill="none" stroke="#e0853a" stroke-width="2.200"><path d="M1345,630L1349,629L1352,632H1354M1349,629L1346,635L1349,638V642M1346,635L1343,639L1339,639"/></g><circle cx="1351" cy="626" r="2" fill="#e0853a"/>

<!-- command line -->
<text x="21" y="669" class="w" textLength="36">Python</text>
<rect x="63" y="653" width="429" height="23" rx="2" fill="#2b2b2b"/>
<rect x="499" y="654" width="834" height="22" fill="#2b2b2b"/>
<rect x="1339" y="655" width="18" height="18" fill="#c4c4c4"/><rect x="1339" y="659" width="18" height="1" fill="#444"/><path d="M1341,657H1347" stroke="#444" stroke-dasharray="1 1"/>
<text x="1341" y="670" style="font-size:9px;fill:#333" textLength="14">{;}</text>
<rect x="0" y="681" width="1366" height="1" fill="#333"/>

<!-- floating window -->
<rect x="8" y="678" width="144" height="27" fill="#fff"/>
<rect x="16" y="683" width="16" height="16" fill="#6cc4cc"/><path d="M17,696L20,687L24,684L28,687L31,696L28,696L24,688L20,696Z" fill="#11707c"/>
<g fill="none" stroke="#8a8a8a"><rect x="33.500" y="688.500" width="8" height="8"/><path d="M36,688V686H43.500V694H41.500"/><rect x="78.500" y="686.500" width="9" height="9" stroke="#6a6a6a"/><path d="M124,686L134,696M134,686L124,696" stroke="#707070"/></g>
</svg>
</body></html>
